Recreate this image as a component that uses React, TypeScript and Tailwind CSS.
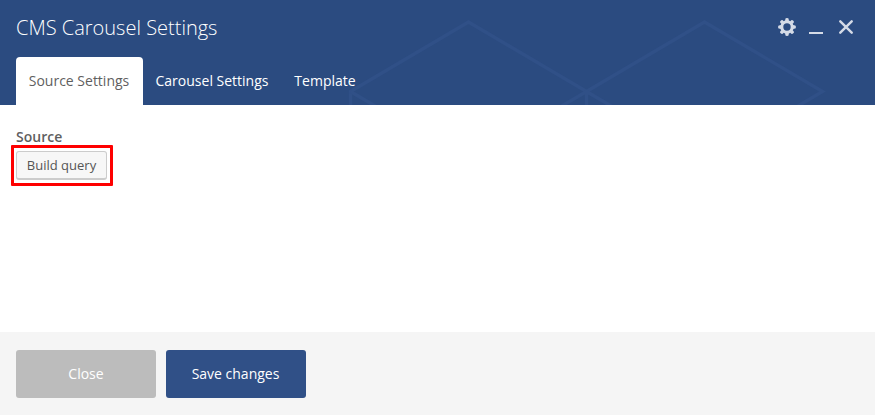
const tabs = [
  { label: 'Source Settings', width: 'w-[127px]', active: true },
  { label: 'Carousel Settings', width: 'w-[138px]', active: false },
  { label: 'Template', width: 'w-[88px]', active: false },
];

function HeaderPattern() {
  return (
    <svg className="absolute inset-0" width="875" height="105" fill="none" stroke="#305087" strokeWidth="3.4">
      <path d="M350.5 107V91.5L468.5 22L586.5 91.5L704.5 22L822.5 91.5L798 106" />
      <path d="M350.5 91.5L376 106.5M586.5 91.5V107M561 106.5L586.5 91.5L612 106.5" />
    </svg>
  );
}

function GearIcon() {
  return (
    <svg width="18" height="18" viewBox="-9 -9 18 18" fill="#d5dbe7">
      {[0, 45, 90, 135].map((angle) => (
        <path
          key={angle}
          transform={`rotate(${angle})`}
          d="M-1.9-6L-1.6-8.2Q-1.5-8.9 0-8.9Q1.5-8.9 1.6-8.2L1.9-6ZM-1.9 6L-1.6 8.2Q-1.5 8.9 0 8.9Q1.5 8.9 1.6 8.2L1.9 6Z"
        />
      ))}
      <circle r="5.2" fill="none" stroke="#d5dbe7" strokeWidth="3" />
    </svg>
  );
}

function CloseIcon() {
  return (
    <svg width="14" height="14" viewBox="0 0 14 14" stroke="#d5dbe7" strokeWidth="2.4" strokeLinecap="round">
      <path d="M1.3 1.3L12.7 12.7M12.7 1.3L1.3 12.7" />
    </svg>
  );
}

export default function App() {
  return (
    <div className="flex h-[415px] w-[875px] flex-col overflow-hidden bg-white font-['Open_Sans',sans-serif] text-sm text-[#5f5f5f]">
      <header className="relative h-[105px] shrink-0 bg-[#2b4b80]">
        <HeaderPattern />
        <div className="relative flex h-full flex-col justify-between">
          <div className="flex justify-between pl-4 pr-[22px]">
            <h1 className="mt-[14px] text-[20px] font-light leading-7 text-white">CMS Carousel Settings</h1>
            <div className="mt-[18px] flex items-start">
              <button aria-label="Settings" className="mr-[13px]"><GearIcon /></button>
              <button aria-label="Minimize" className="mr-4 mt-[14px] h-[2px] w-[14px] bg-[#d5dbe7]" />
              <button aria-label="Close panel" className="mt-[2px]"><CloseIcon /></button>
            </div>
          </div>
          <nav className="flex h-12 pl-4">
            {tabs.map((tab) => (
              <button
                key={tab.label}
                className={`${tab.width} h-12 whitespace-nowrap rounded-t-[4px] text-center leading-[48px] ${
                  tab.active ? 'bg-white pr-px text-[#5f5f5f]' : 'text-white'
                }`}
              >
                {tab.label}
              </button>
            ))}
          </nav>
        </div>
      </header>
      <main className="flex-1 pl-[11px] pt-[22px]">
        <div className="pl-[5px] font-semibold leading-[19px]">Source</div>
        <div className="-mt-px h-[41px] w-[102px] rounded-[1px] border-[3px] border-[#fe0000] p-[2px] pt-[3px]">
          <button className="h-[29px] w-[91px] whitespace-nowrap rounded-[3px] border border-b-2 border-[#ccc] bg-[#f7f7f7] text-center text-[13px] leading-[26px] text-[#555]">
            Build query
          </button>
        </div>
      </main>
      <footer className="flex h-[83px] shrink-0 gap-[10px] bg-[#f5f5f5] pl-4 pt-[18px] text-white">
        <button className="h-12 w-[140px] rounded-[3px] bg-[#bcbcbc]">Close</button>
        <button className="h-12 w-[140px] rounded-[3px] bg-[#305087] pr-px">Save changes</button>
      </footer>
    </div>
  );
}
